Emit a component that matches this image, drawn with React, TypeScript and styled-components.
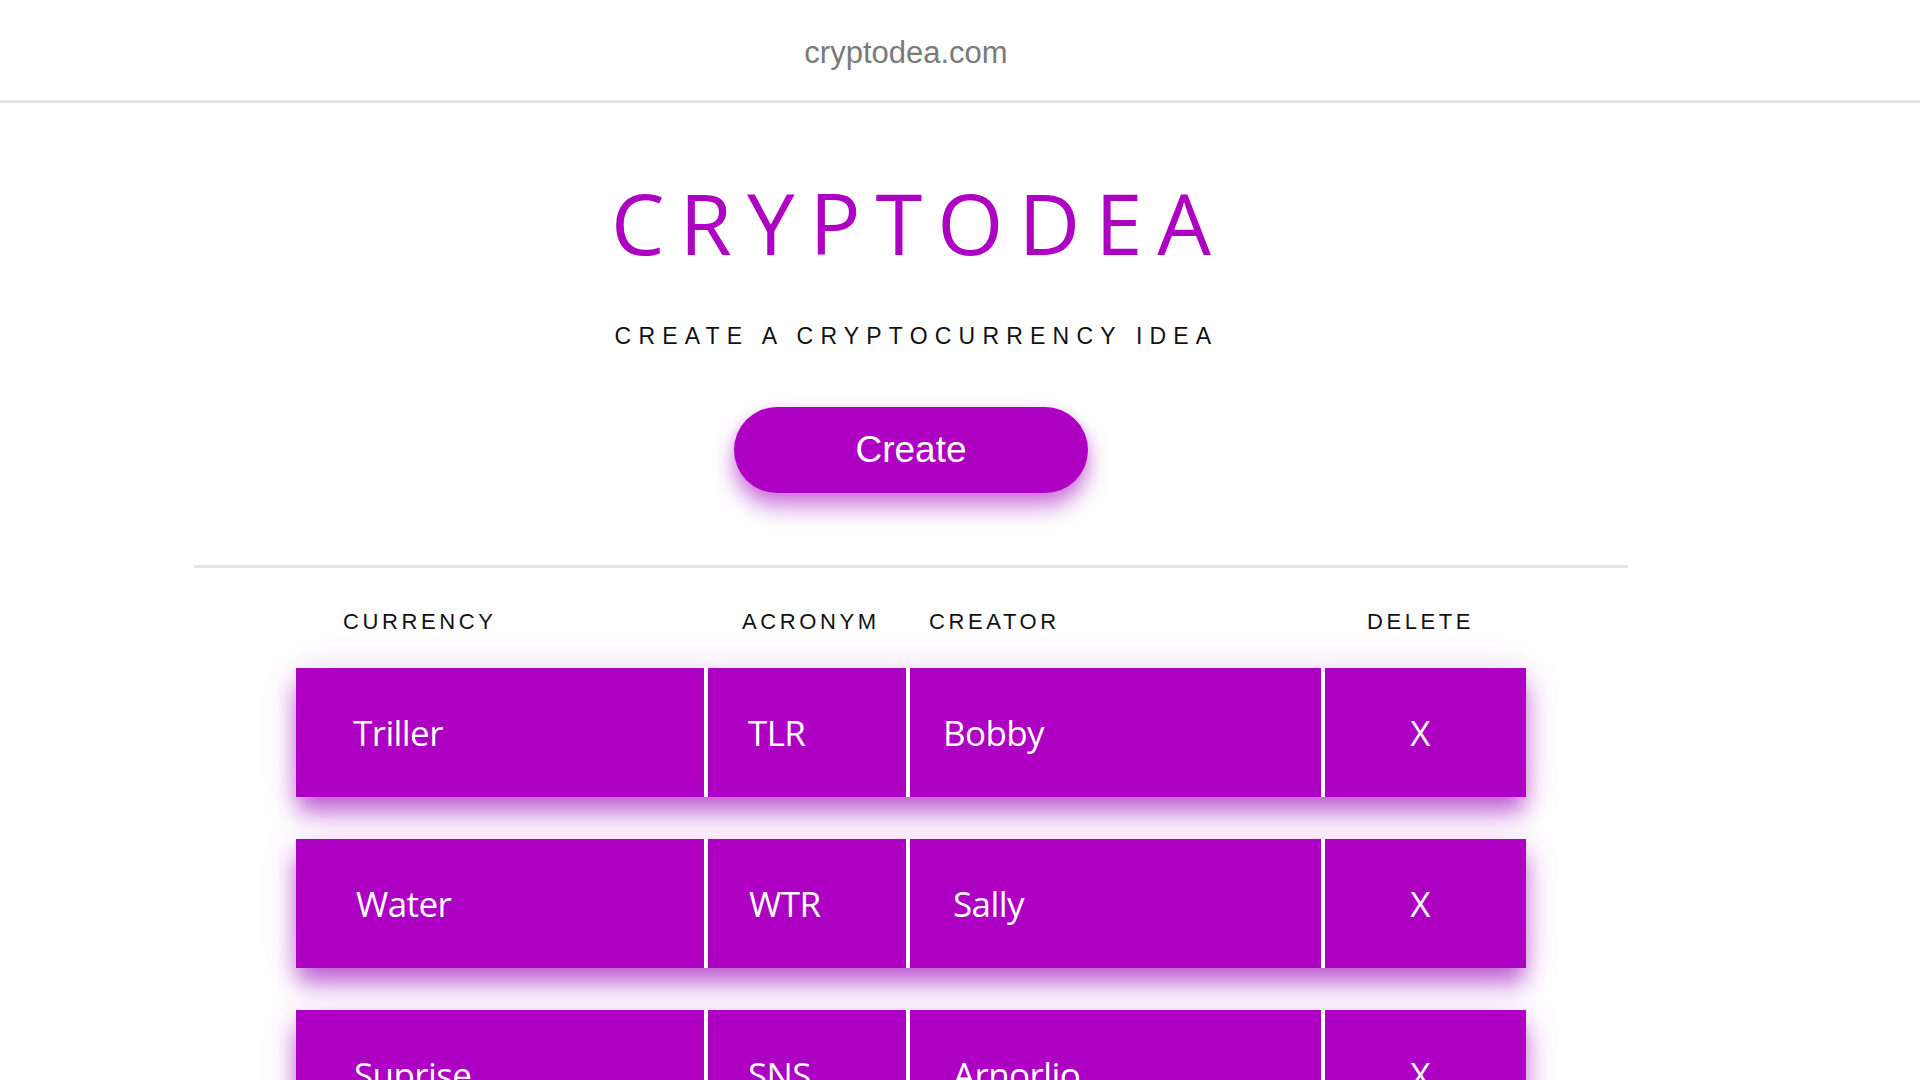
import React from "react";
import styled, { createGlobalStyle } from "styled-components";

const PURPLE = "#ad00c2";

const GlobalStyle = createGlobalStyle`
  html, body {
    margin: 0;
    padding: 0;
    background: #ffffff;
  }
  body {
    font-family: "Liberation Sans", Arial, sans-serif;
    overflow: hidden;
  }
`;

const Page = styled.div`
  width: 1920px;
  min-height: 1080px;
  background: #ffffff;
`;

const TopBar = styled.header`
  height: 103px;
  border-bottom: 3px solid #e4e4e4;
  display: flex;
  align-items: center;
  justify-content: center;
  padding-right: 108px;
  padding-top: 5px;
  box-sizing: border-box;
  width: 100%;
`;

const Domain = styled.span`
  font-family: "Liberation Sans", Arial, sans-serif;
  font-size: 31px;
  color: #7a7a7a;
`;

const Main = styled.main`
  width: 1822px;
  display: flex;
  flex-direction: column;
  align-items: center;
`;

const Title = styled.h1`
  margin: 77px 0 0;
  padding-left: 15px;
  font-family: "Open Sans", "Noto Sans", sans-serif;
  font-weight: 400;
  font-size: 85px;
  line-height: 85px;
  letter-spacing: 15px;
  color: ${PURPLE};
`;

const Subtitle = styled.h2`
  margin: 60px 0 0;
  padding-left: 11px;
  font-family: "Liberation Sans", Arial, sans-serif;
  font-weight: 400;
  font-size: 23px;
  line-height: 23px;
  letter-spacing: 7.2px;
  color: #111111;
`;

const CreateButton = styled.button`
  margin-top: 59px;
  width: 354px;
  height: 86px;
  border: none;
  border-radius: 43px;
  background: ${PURPLE};
  color: #ffffff;
  font-family: "Liberation Sans", Arial, sans-serif;
  font-size: 37px;
  cursor: pointer;
  box-shadow: 0 14px 22px rgba(160, 0, 190, 0.5), 0 2px 12px rgba(170, 0, 200, 0.15);
`;

const Divider = styled.hr`
  margin: 72px 0 0;
  width: 1434px;
  height: 3px;
  border: none;
  background: #e4e4e4;
`;

const Table = styled.section`
  width: 1230px;
  display: flex;
  flex-direction: column;
  margin-top: 43px;
`;

const COLUMNS = "408px 198px 411px 201px";

const HeadRow = styled.div`
  display: grid;
  grid-template-columns: ${COLUMNS};
  column-gap: 4px;
  margin-bottom: 35px;
`;

const HeadCell = styled.div<{ $pad: number; $center?: boolean }>`
  font-family: "Liberation Sans", Arial, sans-serif;
  font-size: 22px;
  line-height: 22px;
  letter-spacing: 3.6px;
  color: #111111;
  padding-left: ${(p) => (p.$center ? 0 : p.$pad)}px;
  padding-right: ${(p) => (p.$center ? 10 : 0)}px;
  text-align: ${(p) => (p.$center ? "center" : "left")};
`;

const Row = styled.div`
  display: grid;
  grid-template-columns: ${COLUMNS};
  column-gap: 4px;
  height: 129px;
  margin-bottom: 42px;
  background: #ffffff;
  box-shadow: 0 16px 22px -2px rgba(150, 0, 180, 0.6), 0 4px 36px rgba(175, 0, 200, 0.17);
`;

const Cell = styled.div<{ $pad: number; $center?: boolean }>`
  background: ${PURPLE};
  display: flex;
  align-items: center;
  justify-content: ${(p) => (p.$center ? "center" : "flex-start")};
  padding-left: ${(p) => (p.$center ? 0 : p.$pad)}px;
  padding-right: ${(p) => (p.$center ? 11 : 0)}px;
  font-family: "Open Sans", "Noto Sans", sans-serif;
  font-size: 35px;
  letter-spacing: -0.6px;
  color: #ffffff;
`;

const rows = [
  { currency: "Triller", acronym: "TLR", creator: "Bobby", pads: [57, 40, 33] },
  { currency: "Water", acronym: "WTR", creator: "Sally", pads: [60, 41, 43] },
  { currency: "Suprise", acronym: "SNS", creator: "Arnorlio", pads: [58, 40, 43] },
];

export default function App() {
  return (
    <Page>
      <GlobalStyle />
      <TopBar>
        <Domain>cryptodea.com</Domain>
      </TopBar>
      <Main>
        <Title>CRYPTODEA</Title>
        <Subtitle>CREATE A CRYPTOCURRENCY IDEA</Subtitle>
        <CreateButton>Create</CreateButton>
        <Divider />
        <Table>
          <HeadRow>
            <HeadCell $pad={47}>CURRENCY</HeadCell>
            <HeadCell $pad={34}>ACRONYM</HeadCell>
            <HeadCell $pad={19}>CREATOR</HeadCell>
            <HeadCell $pad={0} $center>DELETE</HeadCell>
          </HeadRow>
          {rows.map((r) => (
            <Row key={r.acronym}>
              <Cell $pad={r.pads[0]}>{r.currency}</Cell>
              <Cell $pad={r.pads[1]}>{r.acronym}</Cell>
              <Cell $pad={r.pads[2]}>{r.creator}</Cell>
              <Cell $pad={0} $center>X</Cell>
            </Row>
          ))}
        </Table>
      </Main>
    </Page>
  );
}
